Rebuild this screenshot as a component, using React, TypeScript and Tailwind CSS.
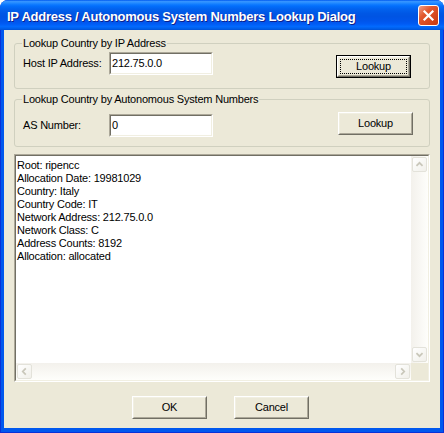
import React from "react";

function Sunken({ className = "", children }: { className?: string; children?: React.ReactNode }) {
  return (
    <div className={`border border-t-[#ACA899] border-l-[#ACA899] border-r-white border-b-white ${className}`}>
      <div className="h-full w-full border border-t-[#716F64] border-l-[#716F64] border-r-[#F1EFE2] border-b-[#F1EFE2] bg-white">
        {children}
      </div>
    </div>
  );
}

function Btn({ label, isDefault = false, className = "" }: { label: string; isDefault?: boolean; className?: string }) {
  if (isDefault) {
    return (
      <div className={`h-[23px] w-[75px] border border-black ${className}`}>
        <div className="h-full w-full border border-t-white border-l-white border-r-[#716F64] border-b-[#716F64]">
          <div className="flex h-full w-full items-center justify-center border border-t-[#F1EFE2] border-l-[#F1EFE2] border-r-[#ACA899] border-b-[#ACA899] bg-[#ECE9D8] p-[1px]">
            <div className="flex h-full w-full items-center justify-center border border-dotted border-black">
              {label}
            </div>
          </div>
        </div>
      </div>
    );
  }
  return (
    <div className={`h-[23px] w-[75px] border border-t-white border-l-white border-r-[#716F64] border-b-[#716F64] ${className}`}>
      <div className="flex h-full w-full items-center justify-center border border-t-[#F1EFE2] border-l-[#F1EFE2] border-r-[#ACA899] border-b-[#ACA899] bg-[#ECE9D8]">
        {label}
      </div>
    </div>
  );
}

function Arrow({ dir }: { dir: "up" | "down" | "left" | "right" }) {
  const d =
    dir === "up"
      ? "M4 9 L7.5 5.5 L11 9"
      : dir === "down"
      ? "M4 6 L7.5 9.5 L11 6"
      : dir === "left"
      ? "M9 4 L5.5 7.5 L9 11"
      : "M6 4 L9.5 7.5 L6 11";
  return (
    <svg width="15" height="15" viewBox="0 0 15 15">
      <path d={d} fill="none" stroke="#C9C7BA" strokeWidth="2" />
    </svg>
  );
}

function ScrollBtn({ dir }: { dir: "up" | "down" | "left" | "right" }) {
  return (
    <div className="flex h-[17px] w-[17px] items-center justify-center p-[1px]">
      <div className="flex h-full w-full items-center justify-center rounded-[2px] border border-[#E3E2DA] bg-[linear-gradient(135deg,#FFFFFF,#F1F0EA)]">
        <Arrow dir={dir} />
      </div>
    </div>
  );
}

const lines = [
  "Root: ripencc",
  "Allocation Date: 19981029",
  "Country: Italy",
  "Country Code: IT",
  "Network Address: 212.75.0.0",
  "Network Class: C",
  "Address Counts: 8192",
  "Allocation: allocated",
];

export default function App() {
  return (
    <div className="h-[433px] w-[444px] overflow-hidden font-['Liberation_Sans',Arial,sans-serif] text-[11px] tracking-[-0.2px] text-black">
      <div className="flex h-full flex-col rounded-t-[8px] border-x border-b border-[#0831D9] bg-[#0058EE]">
        {/* Title bar */}
        <div className="-mx-[1px] flex h-[30px] rounded-t-[8px] bg-[linear-gradient(to_bottom,#0058EE_0%,#3593FF_5%,#288EFF_9%,#127DFF_14%,#036FFC_20%,#0262EE_30%,#0057E5_45%,#0054E3_55%,#0055EB_70%,#005BF5_80%,#026AFE_88%,#0062EF_94%,#0052D6_100%)] pl-[7px] pr-[5px]">
          <div className="mt-[9px] self-start font-['Liberation_Sans',Arial,sans-serif] text-[13px] font-bold leading-[16px] tracking-[-0.25px] text-white [text-shadow:1px_1px_0_#0F1F8A]">
            IP Address / Autonomous System Numbers Lookup Dialog
          </div>
          <div className="ml-auto mt-[5px] flex h-[21px] w-[21px] items-center justify-center self-start rounded-[3px] border border-white bg-[linear-gradient(135deg,#F0A08A_0%,#E2582E_35%,#C8380F_100%)]">
            <svg width="13" height="13" viewBox="0 0 13 13">
              <path d="M2.5 2.5 L10.5 10.5 M10.5 2.5 L2.5 10.5" stroke="white" strokeWidth="2.2" strokeLinecap="square" />
            </svg>
          </div>
        </div>

        {/* Body */}
        <div className="mx-[3px] mb-[4px] flex flex-1 flex-col bg-[#ECE9D8] px-[10px] pt-[6px]">
          <fieldset className="rounded-[3px] border border-[#D0D0BF] pb-[10px]">
            <legend className="ml-[7px] px-[1px] leading-[14px]">Lookup Country by IP Address</legend>
            <div className="flex items-start pl-[8px] pt-[2px]">
              <span className="flex h-[23px] w-[86px] items-center">Host IP Address:</span>
              <Sunken className="h-[23px] w-[104px]">
                <div className="flex h-full items-center pl-[1px]">212.75.0.0</div>
              </Sunken>
              <Btn label="Lookup" isDefault className="ml-auto mr-[18px] mt-[3px]" />
            </div>
          </fieldset>

          <fieldset className="mt-[3px] rounded-[3px] border border-[#D0D0BF] pb-[9px]">
            <legend className="ml-[7px] px-[1px] leading-[14px]">Lookup Country by Autonomous System Numbers</legend>
            <div className="flex items-start pl-[8px]">
              <span className="mt-[8px] flex h-[23px] w-[86px] items-center">AS Number:</span>
              <Sunken className="mt-[8px] h-[23px] w-[104px]">
                <div className="flex h-full items-center pl-[1px]">0</div>
              </Sunken>
              <Btn label="Lookup" className="ml-auto mr-[16px] mt-[6px]" />
            </div>
          </fieldset>

          <Sunken className="mt-[7px] h-[228px]">
            <div className="flex h-full flex-col">
              <div className="flex min-h-0 flex-1">
                <div className="flex-1 pl-[1px] pt-[3px] leading-[13px]">
                  {lines.map((l) => (
                    <div key={l}>{l}</div>
                  ))}
                </div>
                <div className="flex w-[17px] flex-col justify-between bg-[linear-gradient(to_right,#F3F1EC,#FEFEFB)]">
                  <ScrollBtn dir="up" />
                  <ScrollBtn dir="down" />
                </div>
              </div>
              <div className="flex h-[17px]">
                <div className="flex flex-1 justify-between bg-[linear-gradient(to_bottom,#F3F1EC,#FEFEFB)]">
                  <ScrollBtn dir="left" />
                  <ScrollBtn dir="right" />
                </div>
                <div className="w-[17px] bg-[#ECE9D8]" />
              </div>
            </div>
          </Sunken>

          <div className="mt-[14px] flex gap-[27px] pl-[118px]">
            <Btn label="OK" />
            <Btn label="Cancel" />
          </div>
        </div>
      </div>
    </div>
  );
}
